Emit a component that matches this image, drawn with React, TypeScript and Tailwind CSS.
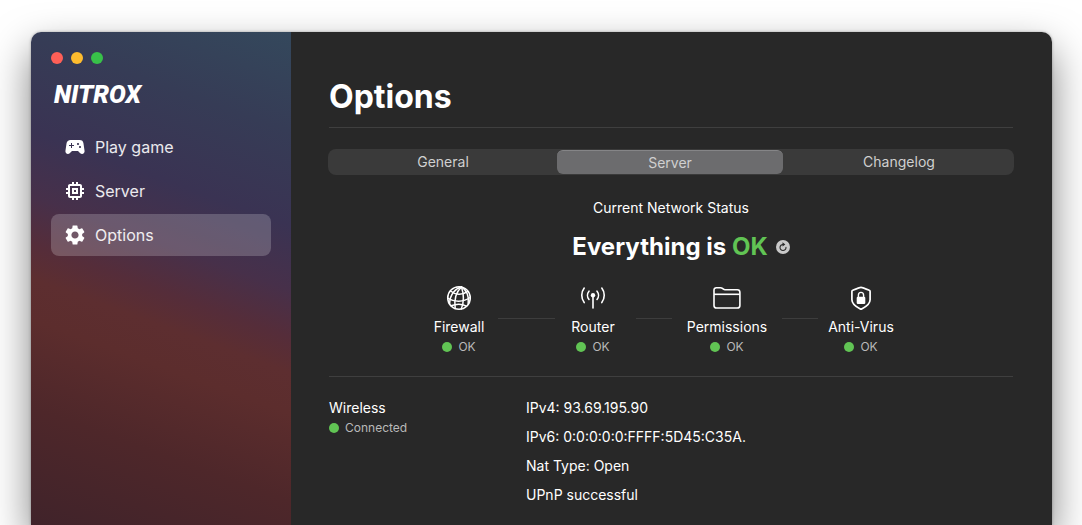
import type { ReactNode } from "react";
import { MdMemory, MdSettings, MdSportsEsports } from "react-icons/md";

function GlobeIcon() {
  return (
    <svg width="28" height="28" viewBox="0 0 28 28" fill="none" stroke="white" strokeWidth="1.5" strokeLinecap="round" aria-hidden="true">
      <circle cx="14" cy="14" r="11.3" />
      <path d="M16.500 3C12 7 8.800 14 10.200 24.500" />
      <path d="M16.500 3C18.500 9 19.500 17 16.300 25" />
      <path d="M16.500 3C21 6 24.200 12 23.200 19.500" />
      <path d="M16.500 3C10.500 4.500 5 10 4.600 19.500" />
      <path d="M5.500 7C10 10.800 17 11.600 22.800 7.400" />
      <path d="M2.800 14C9 18.300 18.500 18.300 25.200 13.500" />
      <path d="M6 21.800C11 19.800 17.500 20 21.500 22.200" />
    </svg>
  );
}

function AntennaIcon() {
  return (
    <svg width="28" height="28" viewBox="0 0 28 28" fill="none" stroke="white" strokeWidth="1.6" strokeLinecap="round" aria-hidden="true">
      <circle cx="14" cy="11.2" r="2.2" fill="white" stroke="none" />
      <path d="M14 12v12" />
      <path d="M10 7.2a6.5 6.5 0 0 0 0 8.300M18 7.2a6.5 6.5 0 0 1 0 8.300" />
      <path d="M5.200 4.100a12 12 0 0 0 0 14.500M22.800 4.100a12 12 0 0 1 0 14.500" />
    </svg>
  );
}

function FolderIcon() {
  return (
    <svg width="28" height="28" viewBox="0 0 28 28" fill="none" stroke="white" strokeWidth="1.6" strokeLinejoin="round" aria-hidden="true">
      <path d="M1 7V6a2.300 2.300 0 0 1 2.300-2.300h4.200c.8 0 1.300.2 1.900.7l1 .8c.5.4.9.6 1.600.6h12.300A2.600 2.600 0 0 1 26.900 8.400v13A2.600 2.600 0 0 1 24.300 24H3.600A2.600 2.600 0 0 1 1 21.400z" />
      <path d="M1 10.300h25.900" />
    </svg>
  );
}

function ShieldIcon() {
  return (
    <svg width="28" height="28" viewBox="0 0 28 28" fill="none" stroke="white" strokeWidth="1.7" strokeLinejoin="round" aria-hidden="true">
      <path d="M14 3.300c.4 0 7.400 2.600 8.300 3 .5.200.8.500.8 1.100v8.300c0 4.400-3.600 6.800-8.400 9.200-.5.200-.9.200-1.400 0-4.800-2.400-8.400-4.800-8.400-9.200V7.400c0-.6.300-.9.800-1.100.9-.4 7.900-3 8.300-3z" />
      <rect x="9.700" y="12.700" width="8.600" height="7.200" rx="1.200" fill="white" stroke="none" />
      <path d="M11.400 13.500v-2.200a2.600 2.900 0 0 1 5.200 0v2.200" strokeWidth="1.400" />
    </svg>
  );
}

function RefreshIcon() {
  return (
    <svg width="14" height="14" viewBox="0 0 14 14" aria-hidden="true">
      <circle cx="7" cy="7" r="7" fill="#c9c9c9" />
      <path d="M10 7.400A3 3 0 1 1 7.200 4.500" fill="none" stroke="#282828" strokeWidth="1.100" strokeLinecap="round" />
      <path d="M6.500 2.200 9.300 4.400 6.500 6.600z" fill="#282828" />
    </svg>
  );
}

function Status({ children }: { children: ReactNode }) {
  return (
    <span className="flex items-center gap-1.5 text-xs leading-4 text-[#b9b9b9]">
      <span className="size-2.5 rounded-full bg-[#61c454]" />
      {children}
    </span>
  );
}

function Check({ icon, name, className }: { icon: ReactNode; name: string; className: string }) {
  return (
    <li className={`flex shrink-0 flex-col items-center ${className}`}>
      {icon}
      <span className="mt-[5px] mb-0.5 text-sm leading-5">{name}</span>
      <Status>OK</Status>
    </li>
  );
}

function Link({ className }: { className: string }) {
  return <li aria-hidden="true" className={`mt-[34px] h-px shrink-0 bg-[#3d3d3d] ${className}`} />;
}

const navItems = [
  { name: "Play game", Icon: MdSportsEsports, active: false },
  { name: "Server", Icon: MdMemory, active: false },
  { name: "Options", Icon: MdSettings, active: true },
];

const details = ["IPv4: 93.69.195.90", "IPv6: 0:0:0:0:0:FFFF:5D45:C35A.", "Nat Type: Open", "UPnP successful"];

export default function App() {
  return (
    <div className="flex min-h-screen flex-col overflow-hidden bg-white pt-8 pr-[30px] pl-[31px] font-['Inter',sans-serif] text-white">
      <div className="flex flex-1 rounded-t-[10px] shadow-[0_18px_40px_rgba(0,0,0,0.5),0_0_3px_rgba(0,0,0,0.3)]">
        <aside className="w-[260px] shrink-0 rounded-tl-[10px] bg-[linear-gradient(200deg,#34485c_0%,#363c56_17%,#3a3353_33%,#47304a_44%,#552d3a_52%,#5d2e30_58%,#5c2d2d_65%,#4e272a_80%,#40232a_100%)] px-5 pt-5">
          <div className="flex gap-2">
            <button aria-label="Close" className="size-3 rounded-full bg-[#ff5f57]" />
            <button aria-label="Minimize" className="size-3 rounded-full bg-[#febc2e]" />
            <button aria-label="Zoom" className="size-3 rounded-full bg-[#38c149]" />
          </div>
          <div className="mt-[15px] px-[3px] font-['Roboto',sans-serif] text-[25px] leading-8 font-black italic">NITROX</div>
          <nav className="mt-[15px] flex flex-col gap-0.5">
            {navItems.map(({ name, Icon, active }) => (
              <a
                key={name}
                href="#"
                aria-current={active ? "page" : undefined}
                className={`flex h-[42px] items-center gap-2 rounded-lg px-3 text-base ${active ? "bg-white/20" : ""}`}
              >
                <Icon className="size-6" aria-hidden="true" />
                <span className="text-white/90">{name}</span>
              </a>
            ))}
          </nav>
        </aside>
        <main className="min-w-0 flex-1 rounded-tr-[10px] bg-[#282828] pr-[39px] pl-[38px]">
          <h1 className="border-b border-[#3f3f3f] pt-[45px] pb-[11px] text-[32px] leading-[39px] font-bold">Options</h1>
          <div role="tablist" className="-mx-px mt-[21px] grid h-[26px] grid-cols-3 rounded-lg bg-[#3a3a3a] p-px text-sm text-[#d0d0d0]">
            <button role="tab" aria-selected="false">General</button>
            <button role="tab" aria-selected="true" className="mr-0.5 rounded-md border-t border-[#858587] bg-[#6c6c6e]">
              Server
            </button>
            <button role="tab" aria-selected="false">Changelog</button>
          </div>
          <section className="border-b border-[#3f3f3f] pb-[21px]">
            <p className="mt-[23px] text-center text-sm leading-5">Current Network Status</p>
            <div className="mt-[13px] flex items-center justify-center gap-2 pl-5">
              <h2 className="text-2xl leading-8 font-bold">
                Everything is <span className="text-[#61c454]">OK</span>
              </h2>
              <button aria-label="Refresh status">
                <RefreshIcon />
              </button>
            </div>
            <ul className="mt-[21px] flex justify-center pr-[18px]">
              <Check className="w-[78px]" icon={<GlobeIcon />} name="Firewall" />
              <Link className="w-[57px]" />
              <Check className="w-[76px]" icon={<AntennaIcon />} name="Router" />
              <Link className="ml-[5px] w-9" />
              <Check className="w-[110px]" icon={<FolderIcon />} name="Permissions" />
              <Link className="w-9" />
              <Check className="w-[86px]" icon={<ShieldIcon />} name="Anti-Virus" />
            </ul>
          </section>
          <section className="flex pt-[21px] text-sm leading-5">
            <div className="flex w-[197px] shrink-0 flex-col gap-0.5">
              <h3>Wireless</h3>
              <Status>Connected</Status>
            </div>
            <ul className="flex flex-col gap-[9px]">
              {details.map((line) => (
                <li key={line}>{line}</li>
              ))}
            </ul>
          </section>
        </main>
      </div>
    </div>
  );
}
